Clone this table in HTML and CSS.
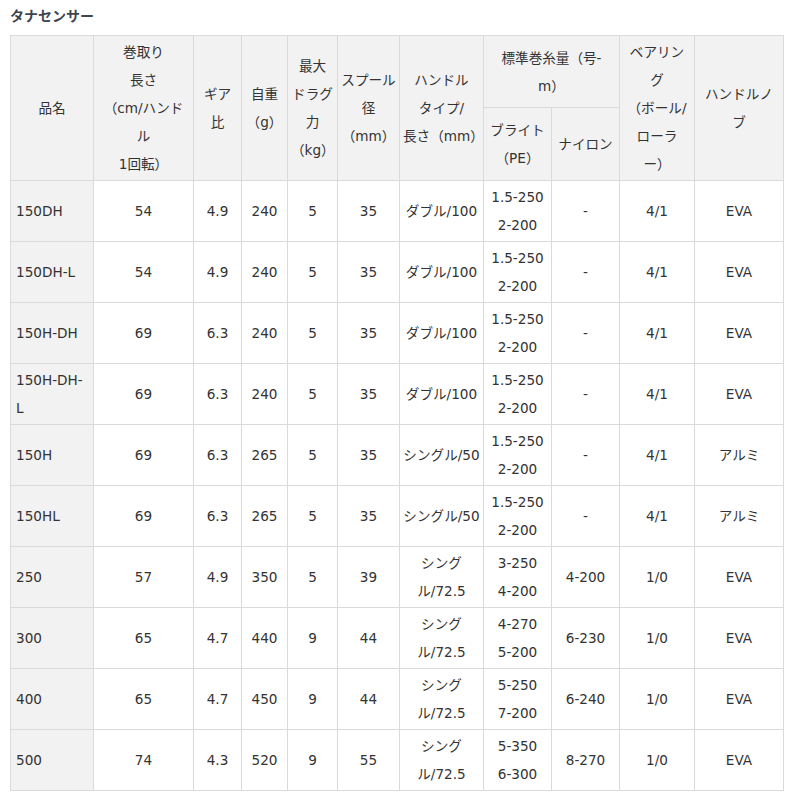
FILE: index.html
```html
<!DOCTYPE html>
<html lang="ja">
<head>
<meta charset="utf-8">
<link rel="stylesheet" href="styles.css">
</head>
<body>
<div class="wrap">
  <h2 class="title">タナセンサー</h2>
  <table class="spec">
    <colgroup>
      <col class="c1"><col class="c2"><col class="c3"><col class="c4"><col class="c5"><col class="c6">
      <col class="c7"><col class="c8"><col class="c9"><col class="c10"><col class="c11">
    </colgroup>
    <thead>
      <tr class="hr1">
        <th rowspan="2">品名</th>
        <th rowspan="2">巻取り<br>長さ<br>（cm/ハンド<br>ル<br>1回転）</th>
        <th rowspan="2">ギア<br>比</th>
        <th rowspan="2">自重<br>（g）</th>
        <th rowspan="2">最大<br>ドラグ<br>力<br>（kg）</th>
        <th rowspan="2">スプール<br>径<br>（mm）</th>
        <th rowspan="2">ハンドル<br>タイプ/<br>長さ（mm）</th>
        <th colspan="2">標準巻糸量（号-<br>m）</th>
        <th rowspan="2">ベアリン<br>グ<br>（ボール/<br>ローラ<br>ー）</th>
        <th rowspan="2">ハンドルノ<br>ブ</th>
      </tr>
      <tr class="hr2">
        <th>ブライト<br>（PE）</th>
        <th>ナイロン</th>
      </tr>
    </thead>
    <tbody>
      <tr><td class="name">150DH</td><td>54</td><td>4.9</td><td>240</td><td>5</td><td>35</td><td>ダブル/100</td><td>1.5-250<br>2-200</td><td>-</td><td>4/1</td><td>EVA</td></tr>
      <tr><td class="name">150DH-L</td><td>54</td><td>4.9</td><td>240</td><td>5</td><td>35</td><td>ダブル/100</td><td>1.5-250<br>2-200</td><td>-</td><td>4/1</td><td>EVA</td></tr>
      <tr><td class="name">150H-DH</td><td>69</td><td>6.3</td><td>240</td><td>5</td><td>35</td><td>ダブル/100</td><td>1.5-250<br>2-200</td><td>-</td><td>4/1</td><td>EVA</td></tr>
      <tr><td class="name">150H-DH-<br>L</td><td>69</td><td>6.3</td><td>240</td><td>5</td><td>35</td><td>ダブル/100</td><td>1.5-250<br>2-200</td><td>-</td><td>4/1</td><td>EVA</td></tr>
      <tr><td class="name">150H</td><td>69</td><td>6.3</td><td>265</td><td>5</td><td>35</td><td>シングル/50</td><td>1.5-250<br>2-200</td><td>-</td><td>4/1</td><td>アルミ</td></tr>
      <tr><td class="name">150HL</td><td>69</td><td>6.3</td><td>265</td><td>5</td><td>35</td><td>シングル/50</td><td>1.5-250<br>2-200</td><td>-</td><td>4/1</td><td>アルミ</td></tr>
      <tr><td class="name">250</td><td>57</td><td>4.9</td><td>350</td><td>5</td><td>39</td><td>シング<br>ル/72.5</td><td>3-250<br>4-200</td><td>4-200</td><td>1/0</td><td>EVA</td></tr>
      <tr><td class="name">300</td><td>65</td><td>4.7</td><td>440</td><td>9</td><td>44</td><td>シング<br>ル/72.5</td><td>4-270<br>5-200</td><td>6-230</td><td>1/0</td><td>EVA</td></tr>
      <tr><td class="name">400</td><td>65</td><td>4.7</td><td>450</td><td>9</td><td>44</td><td>シング<br>ル/72.5</td><td>5-250<br>7-200</td><td>6-240</td><td>1/0</td><td>EVA</td></tr>
      <tr><td class="name">500</td><td>74</td><td>4.3</td><td>520</td><td>9</td><td>55</td><td>シング<br>ル/72.5</td><td>5-350<br>6-300</td><td>8-270</td><td>1/0</td><td>EVA</td></tr>
    </tbody>
  </table>
</div>
</body>
</html>
```

FILE: styles.css
```css
html, body {
  margin: 0;
  padding: 0;
  background: #fff;
}

.wrap {
  padding: 5px 10px 0 10px;
  font-family: "DejaVu Sans", "Noto Sans CJK JP", sans-serif;
  color: #333;
}

.title {
  margin: 0 0 10px 0;
  font-family: "Noto Sans CJK JP", sans-serif;
  font-size: 14px;
  line-height: 20px;
  font-weight: bold;
  color: #3f4550;
}

.spec {
  border-collapse: collapse;
  table-layout: fixed;
  width: 774px;
  font-size: 13.6px;
  line-height: 28px;
}

.spec th,
.spec td {
  border: 1px solid #dadada;
  padding: 2px 3px;
  text-align: center;
  vertical-align: middle;
  white-space: nowrap;
  font-weight: normal;
}

.spec th {
  background: #f2f2f2;
}

.spec td {
  background: #fff;
}

.spec td.name {
  background: #f2f2f2;
  text-align: left;
  padding-left: 5px;
}

.hr1 { height: 72px; }
.hr2 { height: 73px; }

.c1 { width: 83px; }
.c2 { width: 100px; }
.c3 { width: 48px; }
.c4 { width: 46px; }
.c5 { width: 50px; }
.c6 { width: 62px; }
.c7 { width: 84px; }
.c8 { width: 68px; }
.c9 { width: 68px; }
.c10 { width: 75px; }
.c11 { width: 89px; }
```
